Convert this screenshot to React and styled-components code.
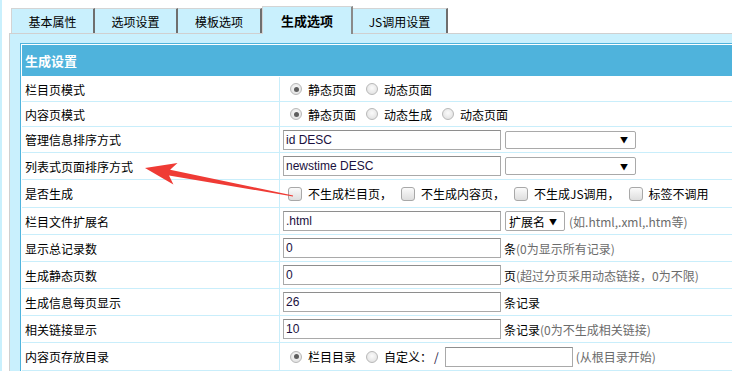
import React from 'react';
import styled, { createGlobalStyle } from 'styled-components';

const GlobalStyle = createGlobalStyle`
  html, body {
    margin: 0;
    padding: 0;
    background: #ffffff;
  }
  body {
    font-family: "Noto Sans CJK SC", "Liberation Sans", sans-serif;
    font-size: 12px;
    color: #000;
    overflow: hidden;
  }
`;

/**
 *  Styled Components
 */
const Page = styled.div`
  position: relative;
  width: 732px;
  height: 371px;
  overflow: hidden;
  border-left: 2px solid #c9f0fd;
  padding-left: 7px;
  box-sizing: border-box;
`;

const TabBar = styled.div`
  display: flex;
  align-items: flex-end;
  height: 34px;
  padding-left: 2px;
  margin-bottom: -1px;
  position: relative;
  z-index: 1;
`;

const Tab = styled.div`
  display: flex;
  align-items: center;
  justify-content: center;
  box-sizing: border-box;
  width: ${p => p.w}px;
  height: ${p => (p.active ? 28 : 25)}px;
  margin-bottom: ${p => (p.active ? 0 : 1)}px;
  background: #c9f0fd;
  border-top: 1px solid #d4d4d4;
  border-left: ${p => (p.first || p.active ? '1px solid #d4d4d4' : 'none')};
  border-right: 2px solid ${p => (p.active ? '#8a8a8a' : '#6e6e6e')};
  font-size: ${p => (p.active ? 13 : 12)}px;
  font-weight: ${p => (p.active ? 700 : 400)};
  padding-top: ${p => (p.active ? 0 : 1)}px;
`;

const Panel = styled.div`
  background: #c9f0fd;
  border-top: 1px solid #d0d0d0;
  border-left: 1px solid #d0d0d0;
  padding: 9px 0 0 10px;
  height: 360px;
`;

const Table = styled.div`
  border: 1px solid #4fb3dc;
  border-right: none;
  padding: 1px 0 0 1px;
  background: #ffffff;
`;

const Header = styled.div`
  height: 31px;
  background: #4fb3dc;
  color: #ffffff;
  font-weight: 700;
  font-size: 13px;
  display: flex;
  align-items: center;
  padding-left: 3px;
  margin-bottom: 1px;
`;

const Row = styled.div`
  display: grid;
  grid-template-columns: 258px 1fr;
  height: ${p => p.h}px;
  border-bottom: 1px solid #c9eefb;
  box-sizing: border-box;
`;

const Label = styled.div`
  display: flex;
  align-items: center;
  padding-left: 3px;
  border-right: 1px solid #c9eefb;
`;

const Value = styled.div`
  display: flex;
  align-items: center;
  padding-left: ${p => p.pad ?? 3}px;
  white-space: nowrap;
`;

const Radio = styled.span`
  width: 12px;
  height: 12px;
  border-radius: 50%;
  border: 1px solid #b8b8b8;
  box-sizing: border-box;
  background: radial-gradient(circle at 50% 40%, #fbfbfb, #dcdcdc);
  display: inline-flex;
  align-items: center;
  justify-content: center;
  margin-right: 6px;
  &::after {
    content: '';
    width: 5px;
    height: 5px;
    border-radius: 50%;
    background: ${p => (p.checked ? '#5e5e5e' : 'transparent')};
  }
`;

const Option = styled.span`
  display: inline-flex;
  align-items: center;
  margin-right: ${p => p.mr ?? 10}px;
`;

const Check = styled.span`
  width: 12px;
  height: 12px;
  border: 1px solid #a8a8a8;
  border-radius: 3px;
  background: linear-gradient(#fafafa, #dedede);
  margin-right: 6px;
  display: inline-block;
`;

const CheckOption = styled.span`
  display: inline-flex;
  align-items: center;
  margin-right: 9px;
`;

const TextInput = styled.input`
  box-sizing: border-box;
  width: ${p => p.w || 218}px;
  height: 20px;
  border: 1px solid #a9a9a9;
  border-top-color: #8e8e8e;
  padding: 0 2px;
  margin: 0;
  font-family: "Liberation Sans", Arial, sans-serif;
  font-size: 12px;
  color: #1a1040;
  background: #fff;
  outline: none;
`;

const Select = styled.div`
  box-sizing: border-box;
  width: ${p => p.w}px;
  height: ${p => p.h || 18}px;
  margin-left: 4px;
  border: 1px solid #a9a9a9;
  border-radius: 2px;
  background: #fff;
  display: flex;
  align-items: center;
  padding: 0 7px 0 3px;
  font-size: 12px;
  &::after {
    content: '▼';
    font-size: 8px;
    margin-left: auto;
    padding-left: 4px;
  }
`;

const Unit = styled.span`
  margin-left: 3px;
`;

const Hint = styled.span`
  color: #6b6b6b;
  margin-left: ${p => p.ml || 0}px;
`;

const Slash = styled.span`
  color: #1a1040;
  margin: 0 6px 0 2px;
`;

const ArrowLayer = styled.svg`
  position: absolute;
  left: 0;
  top: 0;
  pointer-events: none;
  z-index: 5;
`;

function Arrow() {
  // tip -> tail direction
  const tip = [143, 168];
  const tail = [291, 196];
  const dx = tail[0] - tip[0];
  const dy = tail[1] - tip[1];
  const len = Math.hypot(dx, dy);
  const ux = dx / len, uy = dy / len;
  const nx = -uy, ny = ux;
  const hl = 31, hw = 11, sw = 3;
  const base = [tip[0] + ux * hl, tip[1] + uy * hl];
  const neck = [tip[0] + ux * (hl - 6), tip[1] + uy * (hl - 6)];
  const pts = [
    tip,
    [base[0] + nx * hw, base[1] + ny * hw],
    [neck[0] + nx * sw, neck[1] + ny * sw],
    [tail[0] + nx * 0.4, tail[1] + ny * 0.4],
    [tail[0] - nx * 0.4, tail[1] - ny * 0.4],
    [neck[0] - nx * sw, neck[1] - ny * sw],
    [base[0] - nx * hw, base[1] - ny * hw],
  ];
  return (
    <ArrowLayer width="732" height="371">
      <polygon points={pts.map(p => p.join(',')).join(' ')} fill="#ef3b35" />
    </ArrowLayer>
  );
}

const tabs = [
  { t: '基本属性', w: 84 },
  { t: '选项设置', w: 83 },
  { t: '模板选项', w: 84 },
  { t: '生成选项', w: 91, active: true },
  { t: 'JS调用设置', w: 95 },
];

export default function App() {
  return (
    <>
      <GlobalStyle />
      <Page>
        <TabBar>
          {tabs.map((tab, i) => (
            <Tab key={tab.t} w={tab.w} active={tab.active} first={i === 0}>
              {tab.t}
            </Tab>
          ))}
        </TabBar>
        <Panel>
          <Table>
            <Header>生成设置</Header>

            <Row h={25}>
              <Label>栏目页模式</Label>
              <Value pad={10}>
                <Option><Radio checked />静态页面</Option>
                <Option><Radio />动态页面</Option>
              </Value>
            </Row>

            <Row h={25}>
              <Label>内容页模式</Label>
              <Value pad={10}>
                <Option><Radio checked />静态页面</Option>
                <Option><Radio />动态生成</Option>
                <Option><Radio />动态页面</Option>
              </Value>
            </Row>

            <Row h={26}>
              <Label>管理信息排序方式</Label>
              <Value>
                <TextInput defaultValue="id DESC" readOnly />
                <Select w={131} />
              </Value>
            </Row>

            <Row h={27}>
              <Label>列表式页面排序方式</Label>
              <Value>
                <TextInput defaultValue="newstime DESC" readOnly />
                <Select w={131} />
              </Value>
            </Row>

            <Row h={28}>
              <Label>是否生成</Label>
              <Value pad={8}>
                <CheckOption><Check />不生成栏目页，</CheckOption>
                <CheckOption><Check />不生成内容页，</CheckOption>
                <CheckOption><Check />不生成JS调用，</CheckOption>
                <CheckOption><Check />标签不调用</CheckOption>
              </Value>
            </Row>

            <Row h={27}>
              <Label>栏目文件扩展名</Label>
              <Value>
                <TextInput defaultValue=".html" readOnly />
                <Select w={60} h={20}>扩展名</Select>
                <Hint ml={4}>(如.html,.xml,.htm等)</Hint>
              </Value>
            </Row>

            <Row h={27}>
              <Label>显示总记录数</Label>
              <Value>
                <TextInput defaultValue="0" readOnly />
                <Unit>条</Unit><Hint>(0为显示所有记录)</Hint>
              </Value>
            </Row>

            <Row h={27}>
              <Label>生成静态页数</Label>
              <Value>
                <TextInput defaultValue="0" readOnly />
                <Unit>页</Unit><Hint>(超过分页采用动态链接，0为不限)</Hint>
              </Value>
            </Row>

            <Row h={27}>
              <Label>生成信息每页显示</Label>
              <Value>
                <TextInput defaultValue="26" readOnly />
                <Unit>条记录</Unit>
              </Value>
            </Row>

            <Row h={27}>
              <Label>相关链接显示</Label>
              <Value>
                <TextInput defaultValue="10" readOnly />
                <Unit>条记录</Unit><Hint>(0为不生成相关链接)</Hint>
              </Value>
            </Row>

            <Row h={28}>
              <Label>内容页存放目录</Label>
              <Value pad={10}>
                <Option><Radio checked />栏目目录</Option>
                <Option mr={0}><Radio />自定义：</Option>
                <Slash>/</Slash>
                <TextInput w={128} readOnly />
                <Hint ml={3}>(从根目录开始)</Hint>
              </Value>
            </Row>
          </Table>
        </Panel>
        <Arrow />
      </Page>
    </>
  );
}
